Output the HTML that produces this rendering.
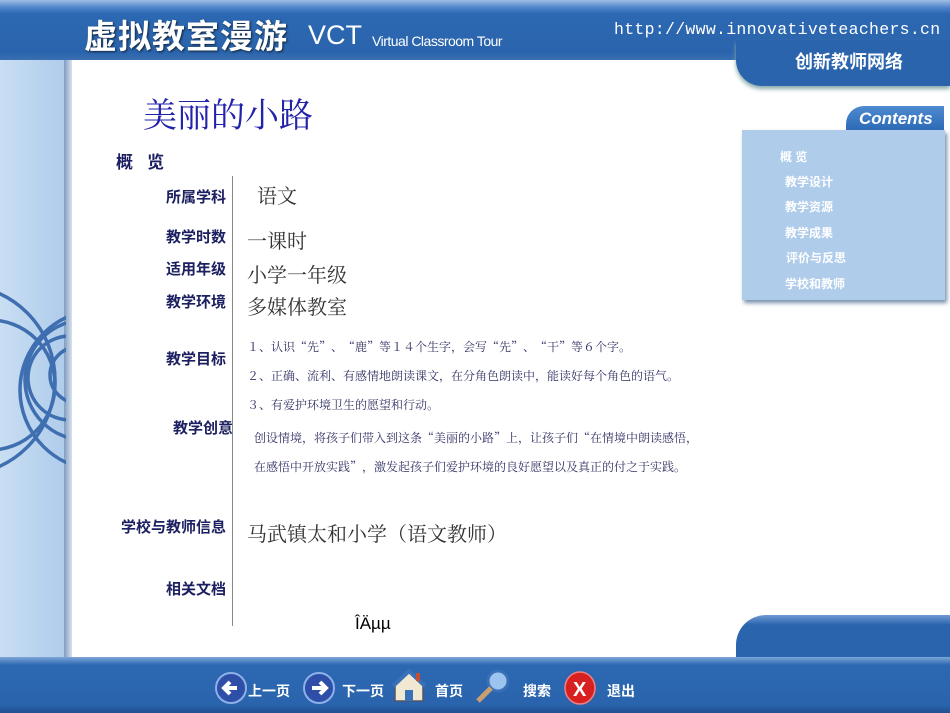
<!DOCTYPE html>
<html><head><meta charset="utf-8"><style>
body{margin:0;width:950px;height:713px;overflow:hidden;background:#fff;position:relative;font-family:"Liberation Sans","Noto Sans CJK SC",sans-serif}
.a{position:absolute;white-space:nowrap}
.lab{position:absolute;right:724px;font-weight:bold;font-size:15px;color:#1c2060;font-family:"Liberation Sans","Noto Sans CJK SC",sans-serif}
.val{position:absolute;left:247px;font-size:20px;color:#333;font-family:"Liberation Serif","Noto Serif CJK SC",serif}
.sm{position:absolute;font-size:12px;color:#333366;font-family:"Noto Serif CJK SC",serif;letter-spacing:0}
.nav{position:absolute;top:681px;color:#fff;font-weight:bold;font-size:14px}
.menu{position:absolute;color:#fff;font-weight:bold;font-size:12px}
</style></head><body>
<div class="a" style="left:0;top:0;width:70px;height:713px;background:linear-gradient(90deg,#c9def3,#adcbea)"></div>
<div class="a" style="left:64px;top:0;width:8px;height:713px;background:linear-gradient(90deg,#7f9cc0,#d8e2ee)"></div>
<svg class="a" style="left:0;top:270px" width="66" height="220" viewBox="0 0 66 220" fill="none" stroke="#3f6fb0" stroke-width="3.5">
<circle cx="-40" cy="110" r="95"/><circle cx="-10" cy="115" r="65"/><circle cx="85" cy="110" r="60"/><circle cx="70" cy="108" r="42"/><circle cx="78" cy="105" r="28"/><circle cx="100" cy="120" r="80"/></svg>
<div class="a" style="left:0;top:0;width:950px;height:60px;background:linear-gradient(180deg,#9fbde6 0,#4c82c8 8px,#2c68b2 14px,#2a64ad 52px,#3a6fb0 60px)"></div>
<div class="a" style="left:736px;top:40px;width:214px;height:46px;background:#2a64ad;border-bottom-left-radius:26px;box-shadow:0 3px 4px #8aa"></div>
<div class="a" style="left:84px;top:10px;font-size:33px;font-weight:bold;color:#fff;letter-spacing:1px;text-shadow:1px 1px 2px #123">虚拟教室漫游</div>
<div class="a" style="left:308px;top:20px;font-size:27px;color:#fff">VCT</div>
<div class="a" style="left:372px;top:33px;font-size:14px;color:#fff;letter-spacing:-0.5px">Virtual Classroom Tour</div>
<div class="a" style="left:614px;top:20px;font-size:16.5px;color:#fff;font-family:'Liberation Mono',monospace;letter-spacing:0.3px">http://www.innovativeteachers.cn</div>
<div class="a" style="left:795px;top:48px;font-size:18px;color:#fff;font-weight:bold">创新教师网络</div>
<div class="a" style="left:846px;top:106px;width:98px;height:26px;background:linear-gradient(180deg,#4d8ad0,#2a68b4);border-top-left-radius:18px"></div>
<div class="a" style="left:859px;top:109px;font-size:17px;font-weight:bold;font-style:italic;color:#fff">Contents</div>
<div class="a" style="left:742px;top:130px;width:203px;height:170px;background:#afcdeb;box-shadow:2px 3px 4px #7890a8"></div>
<div class="menu" style="left:780px;top:148px">概 览</div>
<div class="menu" style="left:785px;top:173px">教学设计</div>
<div class="menu" style="left:785px;top:198px">教学资源</div>
<div class="menu" style="left:785px;top:224px">教学成果</div>
<div class="menu" style="left:786px;top:249px">评价与反思</div>
<div class="menu" style="left:785px;top:275px">学校和教师</div>
<div class="a" style="left:143px;top:88px;font-size:34px;color:#2222aa;font-family:'Liberation Serif','Noto Serif CJK SC',serif">美丽的小路</div>
<div class="a" style="left:116px;top:148px;font-size:17px;font-weight:bold;color:#1c2060">概&nbsp;&nbsp;&nbsp;览</div>
<div class="a" style="left:232px;top:176px;width:1px;height:450px;background:#888"></div>
<div class="lab" style="top:186px">所属学科</div>
<div class="lab" style="top:226px">教学时数</div>
<div class="lab" style="top:258px">适用年级</div>
<div class="lab" style="top:291px">教学环境</div>
<div class="lab" style="top:348px">教学目标</div>
<div class="lab" style="top:417px;right:717px">教学创意</div>
<div class="lab" style="top:516px">学校与教师信息</div>
<div class="lab" style="top:578px">相关文档</div>
<div class="val" style="left:257px;top:180px">语文</div>
<div class="val" style="top:225px">一课时</div>
<div class="val" style="top:259px">小学一年级</div>
<div class="val" style="top:291px">多媒体教室</div>
<div class="sm" style="left:247px;top:338px">１、认识“先”、“鹿”等１４个生字，会写“先”、“干”等６个字。</div>
<div class="sm" style="left:247px;top:367px">２、正确、流利、有感情地朗读课文，在分角色朗读中，能读好每个角色的语气。</div>
<div class="sm" style="left:247px;top:396px">３、有爱护环境卫生的愿望和行动。</div>
<div class="sm" style="left:254px;top:429px">创设情境，将孩子们带入到这条“美丽的小路”上，让孩子们“在情境中朗读感悟，</div>
<div class="sm" style="left:254px;top:458px">在感悟中开放实践”，激发起孩子们爱护环境的良好愿望以及真正的付之于实践。</div>
<div class="val" style="top:518px">马武镇太和小学（语文教师）</div>
<div class="a" style="left:355px;top:614px;font-size:17px;color:#000">ÎÄµµ</div>
<div class="a" style="left:736px;top:615px;width:214px;height:60px;background:linear-gradient(180deg,#6f9bd4,#2a64ad 10px);border-top-left-radius:30px"></div>
<div class="a" style="left:0;top:657px;width:950px;height:56px;background:linear-gradient(180deg,#7ea6d8 0,#2c68b2 8px,#2a64ad 48px,#1f4e8e 56px)"></div>
<svg class="a" style="left:215px;top:672px" width="32" height="32"><circle cx="16" cy="16" r="15" fill="#2d4fa8" stroke="#8fb0e8" stroke-width="2"/><path d="M22 16H10M15 10l-6 6 6 6" stroke="#fff" stroke-width="4" fill="none"/></svg>
<div class="nav" style="left:248px">上一页</div>
<svg class="a" style="left:303px;top:672px" width="32" height="32"><circle cx="16" cy="16" r="15" fill="#2d4fa8" stroke="#8fb0e8" stroke-width="2"/><path d="M9 16H22M17 10l6 6-6 6" stroke="#fff" stroke-width="4" fill="none"/></svg>
<div class="nav" style="left:342px">下一页</div>
<svg class="a" style="left:392px;top:668px" width="34" height="36"><path d="M3 17L17 4 31 17V33H3Z" fill="#f0e8d0" stroke="#556" stroke-width="1.5"/><path d="M1 18L17 3 33 18" stroke="#3a70b8" stroke-width="4" fill="none"/><rect x="13" y="22" width="8" height="11" fill="#3a70b8"/><rect x="24" y="5" width="4" height="8" fill="#c05030"/></svg>
<div class="nav" style="left:435px">首页</div>
<svg class="a" style="left:474px;top:668px" width="38" height="36"><circle cx="24" cy="13" r="10" fill="#9cc4ee" stroke="#3a70b8" stroke-width="3"/><path d="M17 20L4 33" stroke="#c8a070" stroke-width="5"/></svg>
<div class="nav" style="left:523px">搜索</div>
<svg class="a" style="left:564px;top:671px" width="32" height="34"><ellipse cx="16" cy="17" rx="15" ry="16" fill="#d82020" stroke="#f08080" stroke-width="1.5"/><text x="9" y="25" fill="#fff" font-size="20" font-weight="bold" font-family="Liberation Sans">X</text></svg>
<div class="nav" style="left:607px">退出</div>
</body></html>
